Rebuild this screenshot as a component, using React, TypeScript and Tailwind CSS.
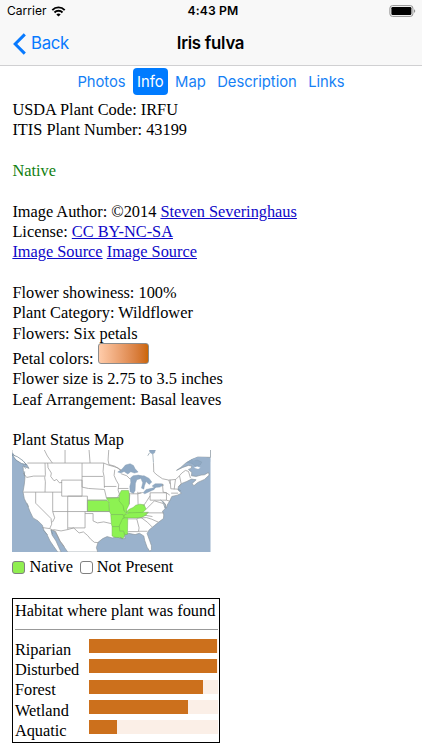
import { ReactNode } from "react";
import { clsx } from "clsx";

const TABS = ["Photos", "Info", "Map", "Description", "Links"];

const HABITATS = [
  { name: "Riparian", width: 128 },
  { name: "Disturbed", width: 128 },
  { name: "Forest", width: 114 },
  { name: "Wetland", width: 99.6 },
  { name: "Aquatic", width: 28.4 },
];

export default function App() {
  return (
    <div className="h-[750px] w-[422px] overflow-hidden bg-white font-[Inter,sans-serif]">
      <StatusBar />
      <NavBar />
      <Tabs active="Info" />
      <main className="pl-[12.4px] pt-[0.8px] font-['Liberation_Serif',serif] text-[16.33px] leading-[20.35px] text-black">
        <PlantInfo />
        <StatusMap />
        <Legend />
        <HabitatChart />
      </main>
    </div>
  );
}

function StatusBar() {
  return (
    <div className="grid h-[22px] grid-cols-3 items-center bg-[#f8f8f8] pl-[7px] pr-[6px] text-black">
      <div className="flex items-center gap-[4px] text-[12px]">
        <span className="tracking-[0.05px]">Carrier</span>
        <svg width="15" height="11" viewBox="0 0 14 11" fill="none">
          <path d="M0.8 4.1C4.2 0.5 9.8 0.5 13.2 4.1" stroke="#000" strokeWidth="1.9" />
          <path d="M3 6.5C5.2 4.2 8.8 4.2 11 6.5" stroke="#000" strokeWidth="1.9" />
          <path d="M7 10.6L4.8 8.4C6 7.2 8 7.2 9.2 8.4Z" fill="#000" />
        </svg>
      </div>
      <div className="pl-[3px] text-center text-[12.2px] font-semibold tracking-[0.1px]">4:43 PM</div>
      <svg className="justify-self-end" width="27" height="12" viewBox="0 0 27 12">
        <rect x="0.9" y="0.6" width="23" height="10.8" rx="2.6" fill="none" stroke="#929292" />
        <rect x="2.4" y="2.1" width="20" height="7.8" rx="1.2" fill="#000" />
        <path d="M25 4.2C26.7 4.7 26.7 7.3 25 7.8Z" fill="#929292" />
      </svg>
    </div>
  );
}

function NavBar() {
  return (
    <header className="grid h-[44px] grid-cols-[1fr_auto_1fr] items-center border-b border-[#d0d0d2] bg-[#f8f8f8] pl-[13px]">
      <div className="flex items-center gap-[5px] text-[16.8px] text-[#087aff]">
        <svg width="13" height="22" viewBox="0 0 13 22" fill="none">
          <path d="M11.8 1.4L2.2 11L11.8 20.6" stroke="currentColor" strokeWidth="3" />
        </svg>
        <span className="tracking-[-0.3px]">Back</span>
      </div>
      <h1 className="-ml-[14px] text-[16.8px] font-semibold tracking-[-0.25px] text-black">Iris fulva</h1>
    </header>
  );
}

function Tabs({ active }: { active: string }) {
  return (
    <nav className="flex h-[33px] items-start justify-center gap-[3px] pt-[2px] text-[14.8px] tracking-[-0.06px]">
      {TABS.map((tab) => (
        <span
          key={tab}
          className={clsx(
            "flex h-[27px] items-center rounded-[4px] px-[4.3px] pt-[1px]",
            tab === active ? "bg-[#007bff] text-white" : "text-[#1580f5]"
          )}
        >
          {tab}
        </span>
      ))}
    </nav>
  );
}

function Link({ children }: { children: ReactNode }) {
  return <a className="text-[#0f08c8] underline">{children}</a>;
}

function PlantInfo() {
  return (
    <section className="whitespace-nowrap">
      <p>USDA Plant Code: IRFU</p>
      <p>ITIS Plant Number: 43199</p>
      <br />
      <p className="text-[#108010]">Native</p>
      <br />
      <p>
        Image Author: ©2014 <Link>Steven Severinghaus</Link>
      </p>
      <p>
        License: <Link>CC BY-NC-SA</Link>
      </p>
      <p>
        <Link>Image Source</Link> <Link>Image Source</Link>
      </p>
      <br />
      <p>Flower showiness: 100%</p>
      <p>Plant Category: Wildflower</p>
      <p>Flowers: Six petals</p>
      <div className="flex h-[25.5px] items-end gap-[4px]">
        <span>Petal colors:</span>
        <span className="mb-[5px] h-[21px] w-[51px] rounded-[3px] border border-[#8c8c8c] bg-linear-to-r from-[#ffccaa] to-[#cc6600]" />
      </div>
      <p>Flower size is 2.75 to 3.5 inches</p>
      <p>Leaf Arrangement: Basal leaves</p>
      <br />
      <p>Plant Status Map</p>
    </section>
  );
}

function StatusMap() {
  return (
    <svg className="-mt-[0.8px] block" width="198.5" height="102" viewBox="23 76 595 305" preserveAspectRatio="none">
      <rect x="23" y="76" width="595" height="305" fill="#9ab2cc" />
      {/* mainland */}
      <path
        d="M23 70H618V98L580 97L563 104L545 114L529 128L516 137L535 128L552 122L562 124L560 131L552 134L562 143L561 153L575 155L590 151L600 150L612 143L614 151L600 164L580 173L568 183L563 176L575 165L561 163L547 170L532 176L522 185L520 195L531 205L519 211L502 215L496 228L488 241L486 250L481 236L482 252L474 259L478 270L477 281L462 292L450 302L434 315L428 326L435 345L441 362L441 374L436 379L428 367L421 347L418 333L405 325L392 329L372 325L360 330L362 341L349 341L337 335L324 339L308 335L295 341L281 352L276 368L280 381H190L178 364L168 350L159 332L151 319L140 315L143 330L155 348L162 364L170 381H160L148 364L137 348L129 331L119 317L114 301L101 288L86 279L77 260L69 240L60 222L56 201L60 178L62 157L57 137L56 124L74 131L67 119L51 107L34 98L23 83Z"
        fill="#fff"
        stroke="#8b969e"
        strokeWidth="2"
      />
      <path d="M23 90L39 96L56 108L66 120L51 116L35 106Z" fill="#fff" stroke="#687d8d" strokeWidth="2" />
      {/* lakes, James Bay and the St. Lawrence */}
      <g fill="#8fa9c4" stroke="#8399ad" strokeWidth="1.2">
        <path d="M340 142L353 133L363 121L377 117L387 122L392 132L401 142L390 145L379 141L370 148L359 140L349 145Z" />
        <path d="M378 160L386 153L402 151L413 154L407 162L397 165L393 176L392 197L387 206L377 201L376 185L379 174Z" />
        <path d="M404 154L419 153L434 161L442 172L434 179L425 170L420 183L418 193L411 190L415 174L410 163Z" />
        <path d="M416 204L425 194L444 190L455 185L449 194L434 201L421 207Z" />
        <path d="M443 184L452 177L471 177L478 181L466 187L451 188Z" />
        <path d="M435 76H453L450 85L444 88L436 83Z" />
        <path d="M548 113L563 104L578 106L592 112L587 121L572 124L562 116Z" />
      </g>
      <path d="M563 104L580 97L604 98L617 103V111L595 110L580 103L567 108Z" fill="#9ab2cc" />
      <path d="M568 129L578 125L588 129L581 133Z" fill="#fff" />

      {/* states with native status */}
      <g fill="#8df252" stroke="#6fb54e" strokeWidth="1.5">
        <path d="M249 226H307L313 233L315 260H249Z" />
        <path d="M306 219L344 218L349 228L358 243L359 256L366 266L361 278H355V269H320L315 260V236Z" />
        <path d="M345 208L351 197H372L376 211L374 239L367 253L368 264L359 258L356 243L344 228Z" />
        <path d="M366 263L373 254L386 248L394 241L406 238L419 240L425 253L414 264L383 266Z" />
        <path d="M361 269L374 264L432 262L424 271L409 279H357Z" />
        <path d="M319 269H356L359 279L348 298L346 305H323L321 297Z" />
        <path d="M355 280H370L369 328L359 329L358 319H345L344 304Z" />
        <path d="M323 305H345L346 319H357L361 332L355 341L345 338L332 337L323 333Z" />
      </g>
      {/* borders */}
      <g fill="none" stroke="#999" strokeWidth="2.2">
        <path d="M69 115H298L312 121L340 129L350 137M120 76L129 94L144 115M182 76V115M254 76L257 115M313 76L311 106L314 121" />
        <path d="M122 115L123 150L121 159L123 171L122 202M130 115L131 129L141 145L139 155L149 168L157 164L165 174L173 173M233 115V187M172 166H233V214H172ZM145 202V260L151 279L144 292M57 202H172M57 145L67 158L88 154L121 154" />
        <path d="M94 202V235L140 281L142 298L136 311M190 214V314M145 260H316M190 214H249V260M242 260V309H191M147 314L170 318L190 314L208 309" />
        <path d="M233 155H296M298 115L296 141L299 155L300 189M233 187L252 191L300 194L306 219M299 185H336M249 226H308M242 266H266V288L279 294L298 291L320 296" />
        <path d="M208 309L224 324L237 321L250 332L259 343L270 352L281 353M114 308L136 311L151 318M153 318L166 347L180 365" />
        <path d="M331 135L329 152L335 166L343 180L341 196L345 208L339 219H306M350 147L367 153L377 163M341 191H372M375 205V238M400 201L401 239M377 207H400L415 203M401 205L410 204" />
        <path d="M437 204H486V226H437ZM437 213L426 230L417 243M425 253L438 240L450 228L466 233L477 236M424 264H477M410 279L426 278L442 283L462 292M421 271L444 275M370 282H397L404 309L402 320H371M397 281L410 278L429 292L443 306M402 319H429" />
        <path d="M447 115L448 142L458 151L474 162L493 166L514 164L525 153L532 145M474 177L476 202L486 204L496 211M497 165L499 192L519 193M500 205L521 205M513 164L509 194M525 153L530 176L523 186M532 145L543 137L552 140L558 160M493 166L497 178M486 226L496 229M475 229L484 241" />
        <path d="M315 120L330 124L350 137" />
      </g>
      {/* rivers and bays */}
      <g fill="none" stroke="#7d909e" strokeWidth="2">
        <path d="M58 123L64 132M61 140L60 154M68 235L73 246M118 316L130 330M140 315L145 327M475 232L482 250M468 225L480 235M346 337L354 341M521 193L529 198M430 93L435 85M445 88L447 114" />
      </g>
    </svg>
  );
}

function Legend() {
  return (
    <div className="flex h-[30px] items-center">
      <span className="mr-[4px] h-[13px] w-[13px] rounded-[3px] border border-[#808080] bg-[#90ee50]" />
      Native
      <span className="ml-[7.3px] mr-[3.5px] h-[13px] w-[13px] rounded-[3px] border border-[#808080] bg-white" />
      Not Present
    </div>
  );
}

function HabitatChart() {
  return (
    <section className="mt-[16px] h-[145px] w-[208px] border border-black pl-[1.5px] pr-[1.5px] pt-[2px]">
      <h2>Habitat where plant was found</h2>
      <hr className="mt-[7.5px] border-t-[1.3px] border-[#999]" />
      <ul className="mt-[9px]">
        {HABITATS.map((habitat) => (
          <li key={habitat.name} className="flex h-[20.35px] items-start">
            <span className="w-[74px] pt-[0.7px]">{habitat.name}</span>
            <div className="h-[14px] flex-1 bg-[#fbefe7]">
              <div className="h-full bg-[#cc701c]" style={{ width: habitat.width }} />
            </div>
          </li>
        ))}
      </ul>
    </section>
  );
}
